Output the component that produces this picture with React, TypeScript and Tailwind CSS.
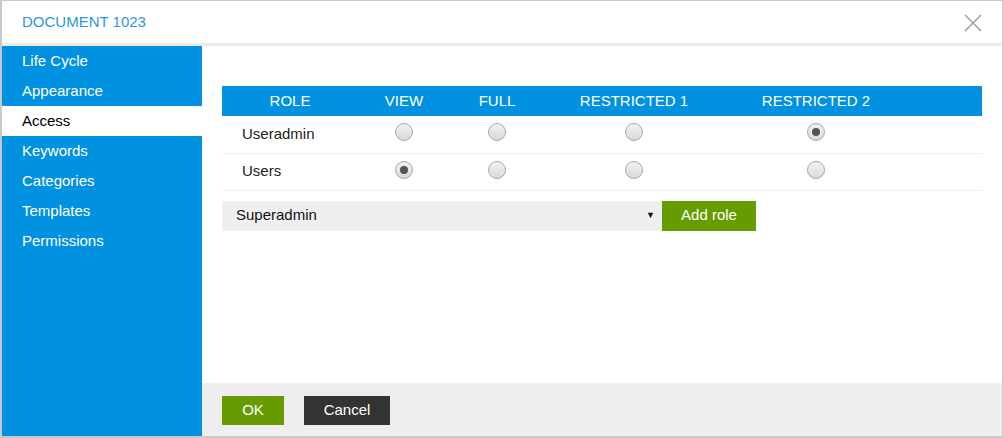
import React, { useState } from 'react';

const menu = ['Life Cycle', 'Appearance', 'Access', 'Keywords', 'Categories', 'Templates', 'Permissions'];
const columns = ['VIEW', 'FULL', 'RESTRICTED 1', 'RESTRICTED 2'];

const Radio = ({ checked, onClick }: { checked: boolean; onClick: () => void }) => (
  <button
    type="button"
    onClick={onClick}
    className="w-[18px] h-[18px] rounded-full border border-[#a9a9a9] bg-gradient-to-b from-[#f2f2f2] to-[#d9d9d9] flex items-center justify-center mx-auto mb-[4px]"
  >
    {checked && <span className="block w-[8px] h-[8px] rounded-full bg-[#555555]" />}
  </button>
);

const App = () => {
  const [active, setActive] = useState('Access');
  const [rights, setRights] = useState<Record<string, number>>({ Useradmin: 3, Users: 0 });

  return (
    <div className="w-[1003px] h-[438px] bg-white border-l-2 border-b-2 border-r border-t border-[#c9c9c9] flex flex-col text-[15px]" style={{ fontFamily: '"Liberation Sans", Arial, sans-serif' }}>
      {/* Header */}
      <div className="h-[45px] shrink-0 flex items-center justify-between pl-[20px] pr-[20px] border-b-[3px] border-[#ececec]">
        <span className="text-[#2e96dc] text-[15px]">DOCUMENT 1023</span>
        <button type="button" className="w-[18px] h-[18px] mt-[1px]">
          <svg width="18" height="18" viewBox="0 0 18 18" fill="none" stroke="#9a9a9a" strokeWidth="1.4">
            <path d="M1 1L17 17M17 1L1 17" />
          </svg>
        </button>
      </div>

      <div className="flex flex-1 min-h-0">
        {/* Sidebar */}
        <nav className="w-[200px] bg-[#0091e0] flex flex-col">
          {menu.map((item) => (
            <button
              key={item}
              type="button"
              onClick={() => setActive(item)}
              className={`h-[30px] text-left pl-[20px] ${active === item ? 'bg-white text-black' : 'text-white'}`}
            >
              {item}
            </button>
          ))}
        </nav>

        {/* Content */}
        <div className="flex-1 flex flex-col">
          <div className="flex-1 pt-[40px] px-[20px]">
            <table className="w-[760px] border-collapse table-fixed">
              <thead>
                <tr className="bg-[#0091e0] text-white h-[30px]">
                  <th className="w-[136px] font-normal text-center">ROLE</th>
                  <th className="w-[92px] font-normal text-center">VIEW</th>
                  <th className="w-[94px] font-normal text-center">FULL</th>
                  <th className="w-[180px] font-normal text-center">RESTRICTED 1</th>
                  <th className="w-[184px] font-normal text-center">RESTRICTED 2</th>
                  <th className="font-normal"></th>
                </tr>
              </thead>
              <tbody>
                {Object.keys(rights).map((role) => (
                  <tr key={role} className="h-[37px] border-b border-[#ececf3] text-[#222]">
                    <td className="pl-[20px]">{role}</td>
                    {columns.map((col, i) => (
                      <td key={col}>
                        <Radio checked={rights[role] === i} onClick={() => setRights({ ...rights, [role]: i })} />
                      </td>
                    ))}
                    <td></td>
                  </tr>
                ))}
              </tbody>
            </table>

            <div className="flex mt-[10px]">
              <div className="w-[440px] h-[30px] bg-[#efefef] flex items-center justify-between pl-[14px] pr-[7px] text-[#111]">
                <span>Superadmin</span>
                <span className="text-[9px]">▼</span>
              </div>
              <button type="button" className="w-[94px] h-[30px] bg-[#669c00] text-white">Add role</button>
            </div>
          </div>

          {/* Footer */}
          <div className="h-[53px] bg-[#eeeeee] flex items-start gap-[20px] pl-[20px] pt-[13px]">
            <button type="button" className="w-[62px] h-[29px] bg-[#669c00] text-white">OK</button>
            <button type="button" className="w-[86px] h-[29px] bg-[#333333] text-white">Cancel</button>
          </div>
        </div>
      </div>
    </div>
  );
};

export default App;
